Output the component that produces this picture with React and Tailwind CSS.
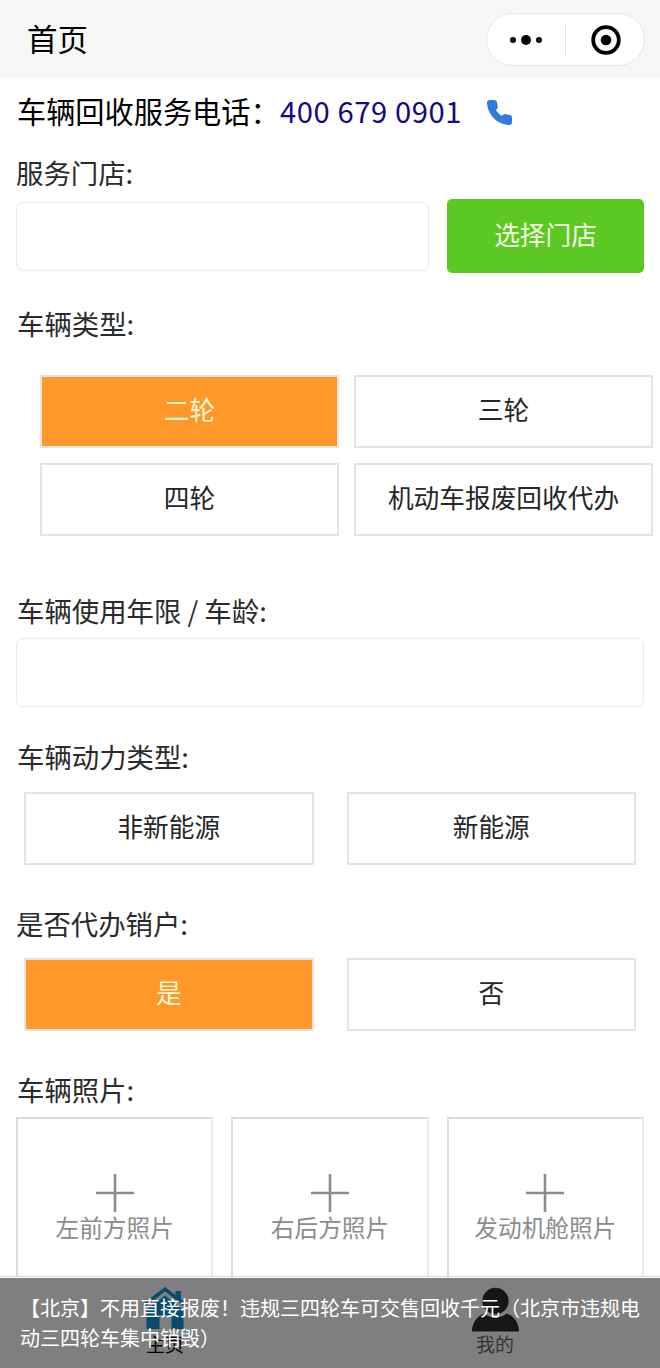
import { useState } from 'react';

const vehicleTypes = ['二轮', '三轮', '四轮', '机动车报废回收代办'];
const powerTypes = ['非新能源', '新能源'];
const cancelOptions = ['是', '否'];
const photoSlots = ['左前方照片', '右后方照片', '发动机舱照片'];

function PhoneIcon() {
  return (
    <svg className="w-[25px] h-[25px] block" viewBox="0 0 25 25" fill="#2d7be0">
      <path d="M3 0H7C8.8 0 9.6 .8 9.9 2.2L10.7 6C11 7.6 10.6 8.4 9.8 9.2L9 10C10 12 12.6 14.6 14.8 15.8L15.8 14.9C16.6 14.1 17.6 13.9 18.8 14.2L22.6 15C24.2 15.3 25 16.2 25 17.8V22C25 24 23.9 25 22 24.9C10.3 24.5 .7 15 0 2.8C-.1 1.1 1.1 0 3 0Z" />
    </svg>
  );
}

function Capsule() {
  return (
    <div className="w-[159px] h-[53px] mt-px rounded-full border border-[#e6e6e6] bg-white flex items-center">
      <div className="w-[79px] h-8 flex items-center justify-center gap-[5px] border-r border-[#e6e6e6]">
        <span className="w-[6px] h-[6px] rounded-full bg-black" />
        <span className="w-[10px] h-[10px] rounded-full bg-black" />
        <span className="w-[6px] h-[6px] rounded-full bg-black" />
      </div>
      <div className="flex-1 flex justify-center pl-[2px]">
        <svg className="w-[30px] h-[30px]" viewBox="0 0 30 30">
          <circle cx="15" cy="15" r="12.8" fill="none" stroke="#000" strokeWidth="3.8" />
          <circle cx="15" cy="15" r="5.3" />
        </svg>
      </div>
    </div>
  );
}

function Label({ children }) {
  return <h2 className="h-10 text-[27.4px] leading-[38px] text-[#2b2b2b] whitespace-pre">{children}</h2>;
}

function Option({ label, active, onClick }) {
  return (
    <button
      onClick={onClick}
      className={`h-[73px] pb-[5px] border-2 border-[#e4e4e4] text-[25.7px] leading-none flex items-center justify-center ${
        active ? 'bg-[#ff9829] text-[#fff8d8]' : 'bg-white text-[#262626]'
      }`}
    >
      {label}
    </button>
  );
}

function PhotoSlot({ label }) {
  return (
    <div className="h-[164px] pt-[55px] border-2 border-[#dcdcdc] border-r-[#ececec] flex flex-col items-center text-[#8c8c8c]">
      <svg className="w-[38px] h-[38px] shrink-0" viewBox="0 0 38 38" stroke="currentColor" strokeWidth="2.6">
        <path d="M19 0V38M0 19H38" />
      </svg>
      <span className="text-[23.7px] leading-[30px] whitespace-nowrap">{label}</span>
    </div>
  );
}

export default function App() {
  const [type, setType] = useState('二轮');
  const [power, setPower] = useState('');
  const [cancel, setCancel] = useState('是');

  return (
    <div className="relative w-[660px] h-[1368px] overflow-hidden bg-white font-['Noto_Sans_CJK_SC',sans-serif]">
      {/* Nav bar */}
      <header className="h-[78px] bg-[#f7f7f7] pl-[27px] pr-[15px] flex items-center justify-between">
        <h1 className="pb-[2px] text-[30.5px] leading-10 text-black">首页</h1>
        <Capsule />
      </header>

      <main className="h-[1198px] overflow-hidden">
        {/* Hotline */}
        <div className="h-[68px] pl-[17px] flex items-center text-[29.2px] text-black">
          <span className="w-[263px] pb-[2px] whitespace-nowrap">车辆回收服务电话：</span>
          <a href="tel:4006790901" className="w-[207px] pb-[2px] tracking-[0.58px] text-[#160a80] whitespace-nowrap">
            400 679 0901
          </a>
          <PhoneIcon />
        </div>

        {/* Store */}
        <section className="px-4 pt-[7px]">
          <Label>服务门店:</Label>
          <div className="mt-[6px] flex items-center justify-between">
            <input className="w-[413px] h-[69px] rounded-[7px] border border-[#e8e8e8]" />
            <button className="w-[197px] h-[74px] pb-[4px] rounded-[5px] bg-[#5cc823] text-[#f6ffe8] text-[25.7px]">
              选择门店
            </button>
          </div>
        </section>

        {/* Vehicle type */}
        <section className="pt-[31px]">
          <div className="pl-[17px]">
            <Label>车辆类型:</Label>
          </div>
          <div className="mt-[31px] pl-10 pr-[7px] grid grid-cols-2 gap-x-[15px] gap-y-[15px]">
            {vehicleTypes.map((t) => (
              <Option key={t} label={t} active={t === type} onClick={() => setType(t)} />
            ))}
          </div>
        </section>

        {/* Age */}
        <section className="px-4 pt-[55px]">
          <div className="pl-px">
            <Label>车辆使用年限 / 车龄:</Label>
          </div>
          <input className="mt-[7px] w-full h-[69px] block rounded-[7px] border border-[#e8e8e8]" />
        </section>

        {/* Power type */}
        <section className="pt-[30px]">
          <div className="pl-[17px]">
            <Label>车辆动力类型:</Label>
          </div>
          <div className="mt-[15px] px-6 grid grid-cols-2 gap-x-[33px]">
            {powerTypes.map((t) => (
              <Option key={t} label={t} active={t === power} onClick={() => setPower(t)} />
            ))}
          </div>
        </section>

        {/* Account cancellation */}
        <section className="pt-[39px]">
          <div className="pl-4">
            <Label>是否代办销户:</Label>
          </div>
          <div className="mt-[14px] px-6 grid grid-cols-2 gap-x-[33px]">
            {cancelOptions.map((t) => (
              <Option key={t} label={t} active={t === cancel} onClick={() => setCancel(t)} />
            ))}
          </div>
        </section>

        {/* Photos */}
        <section className="px-4 pt-[39px]">
          <div className="pl-px">
            <Label>车辆照片:</Label>
          </div>
          <div className="mt-[7px] grid grid-cols-3 gap-x-[18px]">
            {photoSlots.map((p) => (
              <PhotoSlot key={p} label={p} />
            ))}
          </div>
        </section>
      </main>

      {/* Tab bar */}
      <nav className="h-[92px] border-t border-[#d8d8d8] bg-white grid grid-cols-2">
        <div className="pt-[10px] flex flex-col items-center">
          <svg className="w-[46px] h-[43px]" viewBox="0 0 46 43" fill="#1296db">
            <path d="M2 18.5L23 2.2L44 18.5" fill="none" stroke="#1296db" strokeWidth="3.6" />
            <path d="M33.5 4H39V15L33.5 10.5Z" />
            <path d="M23 8.5L41.5 23V42H29.5V28H17.5V42H4.5V23Z" />
          </svg>
          <span className="text-[19px] leading-[28px] text-black">主页</span>
        </div>
        <div className="pt-[10px] flex flex-col items-center">
          <svg className="w-[47px] h-[45px]" viewBox="0 0 47 45" fill="#2c2c2c">
            <circle cx="23.5" cy="14" r="13.2" />
            <path d="M0 44.5C0 35 6 28.5 12.5 26.5C18 32 29 32 34.5 26.5C41 28.5 47 35 47 44.5Z" />
          </svg>
          <span className="-mt-[2px] text-[19px] leading-[28px] text-[#666]">我的</span>
        </div>
      </nav>

      {/* Caption laid over the tab bar */}
      <div className="absolute inset-x-0 bottom-0 h-[90px] pl-5 pt-[15px] bg-black/50 text-white text-[20px] leading-[30px]">
        <p className="whitespace-nowrap">【北京】不用直接报废！违规三四轮车可交售回收千元（北京市违规电</p>
        <p className="whitespace-nowrap">动三四轮车集中销毁）</p>
      </div>
    </div>
  );
}
